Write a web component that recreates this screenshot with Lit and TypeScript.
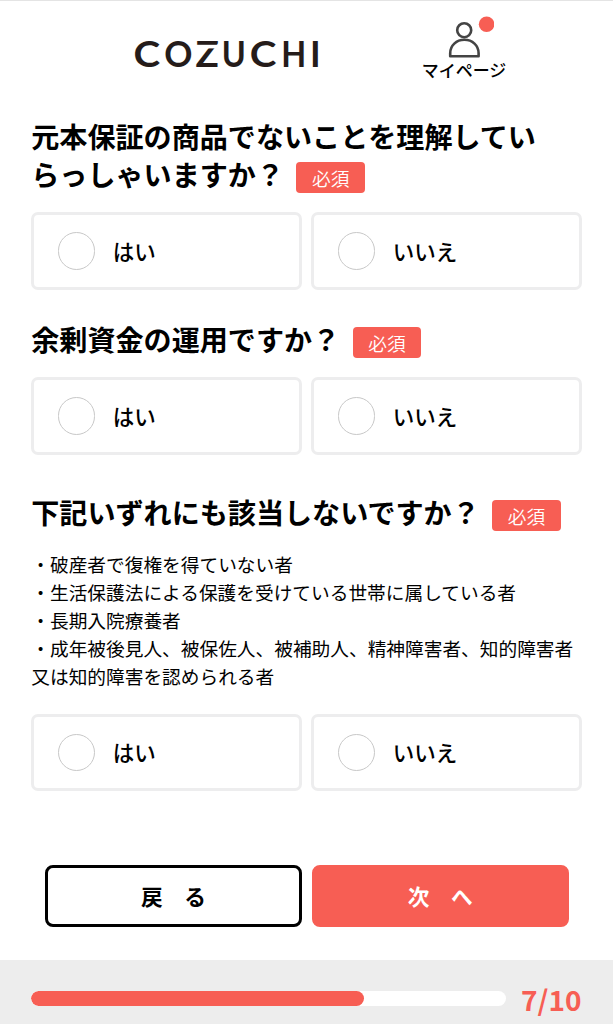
import { LitElement, html, css, svg } from "lit";
import { customElement, property } from "lit/decorators.js";

@customElement("choice-card")
class ChoiceCard extends LitElement {
  @property() label = "";
  static styles = css`
    :host {
      box-sizing: border-box;
      display: flex;
      align-items: center;
      gap: 17.5px;
      height: 77.5px;
      padding-left: 23.5px;
      border: 3px solid #ededee;
      border-radius: 7px;
      background: #fff;
    }
    .dot {
      box-sizing: border-box;
      width: 37.5px;
      height: 37.5px;
      border: 1.4px solid #c8c8c8;
      border-radius: 50%;
    }
    .label {
      font-size: 21.5px;
      line-height: 32px;
      font-weight: 500;
    }
  `;
  render() {
    return html`<span class="dot"></span><span class="label">${this.label}</span>`;
  }
}

@customElement("question-block")
class QuestionBlock extends LitElement {
  @property({ attribute: false }) lines: string[] = [];
  @property({ attribute: false }) notes: string[] = [];
  static styles = css`
    :host {
      display: block;
    }
    .title {
      margin: 0;
      font-size: 28.08px;
      line-height: 36px;
      font-weight: 700;
      white-space: nowrap;
    }
    .row {
      display: flex;
      height: 38px;
    }
    .badge {
      box-sizing: border-box;
      width: 68.7px;
      height: 31px;
      margin: 6px 0 0 12.4px;
      border-radius: 4px;
      background: #f75e54;
      color: #fff;
      font-size: 18.7px;
      line-height: 31px;
      font-weight: 350;
      text-align: center;
    }
    .notes {
      margin: 18px 0 8px;
      font-size: 18.7px;
      line-height: 28px;
      white-space: nowrap;
    }
    .choices {
      display: grid;
      grid-template-columns: 1fr 1fr;
      gap: 9.5px;
      margin-top: 18px;
    }
    .notes + .choices {
      margin-top: 23.5px;
    }
  `;
  render() {
    const last = this.lines.length - 1;
    return html`
      <h2 class="title">
        ${this.lines.map(
          (t, i) => html`<div class="row"><span>${t}</span>${i === last ? html`<span class="badge">必須</span>` : ""}</div>`
        )}
      </h2>
      ${this.notes.length ? html`<div class="notes">${this.notes.map((n) => html`<div>${n}</div>`)}</div>` : ""}
      <div class="choices">
        <choice-card label="はい"></choice-card>
        <choice-card label="いいえ"></choice-card>
      </div>
    `;
  }
}

// Wordmark letters: glyph, left edge, horizontal stretch.
const WORDMARK: [string, number, number][] = [
  ["C", 133.4, 1.12],
  ["O", 164.2, 0.97],
  ["Z", 195.4, 1.07],
  ["U", 221.8, 0.9],
  ["C", 249.8, 1.12],
  ["H", 281.2, 0.9],
  ["I", 310, 1],
];

@customElement("app-root")
class AppRoot extends LitElement {
  @property({ type: Number }) step = 7;
  @property({ type: Number }) total = 10;
  static styles = css`
    :host {
      box-sizing: border-box;
      display: flex;
      flex-direction: column;
      height: 1024px;
      overflow: hidden;
      border-top: 1px solid #e4e4e4;
      background: #fff;
      color: #000;
      font-family: "Noto Sans CJK JP", sans-serif;
    }
    .header {
      display: flex;
      height: 117px;
      flex: none;
    }
    .logo {
      display: block;
      width: 200px;
      height: 60px;
      margin: 23px 0 0 128px;
    }
    .logo text {
      font-family: Lato, sans-serif;
      font-size: 36px;
      font-weight: 700;
      fill: #251c1a;
    }
    .mypage {
      display: flex;
      flex-direction: column;
      align-items: center;
      width: 100px;
      margin: 13px 0 0 86px;
      font-size: 17px;
      line-height: 23px;
      font-weight: 500;
      white-space: nowrap;
    }
    .person {
      display: block;
      width: 60px;
      height: 44px;
      flex: none;
    }
    .form {
      flex: 1;
      padding: 0 31.3px;
    }
    .second {
      margin-top: 31.7px;
    }
    .third {
      margin-top: 39.5px;
    }
    .actions {
      display: grid;
      grid-template-columns: 1fr 1fr;
      gap: 9.5px;
      margin: 73.5px 12.8px 0 13.5px;
    }
    .button {
      box-sizing: border-box;
      height: 62px;
      border: 3px solid #000;
      border-radius: 8px;
      background: #fff;
      color: #000;
      font: inherit;
      font-size: 21.7px;
      font-weight: 700;
      line-height: 32px;
      padding: 0;
    }
    .next {
      border-color: #f75e54;
      background: #f75e54;
      color: #fff;
    }
    .footer {
      box-sizing: border-box;
      display: flex;
      flex: none;
      height: 64px;
      padding: 30.5px 31.5px 0 31px;
      justify-content: space-between;
      background: #ededed;
    }
    .track {
      width: 475px;
      height: 15.5px;
      border-radius: 8px;
      background: #fff;
      overflow: hidden;
    }
    .fill {
      height: 100%;
      border-radius: 8px;
      background: #f75e54;
    }
    .count {
      margin-top: -12px;
      color: #f75e54;
      font-size: 28px;
      line-height: 40px;
      font-weight: 700;
    }
  `;
  render() {
    return html`
      <header class="header">
        <svg class="logo" viewBox="128 24 200 60">
          ${WORDMARK.map(([c, x, s]) => svg`<text transform="translate(${x} 67) scale(${s} 1)">${c}</text>`)}
          <rect x="196" y="44.8" width="23" height="3.6" fill="#fff" />
        </svg>
        <div class="mypage">
          <svg class="person" viewBox="434 14 60 44">
            <g fill="none" stroke="#444" stroke-width="2.6">
              <circle cx="464.2" cy="30.2" r="7" />
              <path d="M450.2 56.2v-3c0-7.6 6.2-13.4 14.2-13.4s14.2 5.8 14.2 13.4v3z" stroke-linejoin="round" />
            </g>
            <circle cx="486.6" cy="24.3" r="7.8" fill="#f75e54" />
          </svg>
          <span>マイページ</span>
        </div>
      </header>
      <main class="form">
        <question-block .lines=${["元本保証の商品でないことを理解してい", "らっしゃいますか？"]}></question-block>
        <question-block class="second" .lines=${["余剰資金の運用ですか？"]}></question-block>
        <question-block
          class="third"
          .lines=${["下記いずれにも該当しないですか？"]}
          .notes=${[
            "・破産者で復権を得ていない者",
            "・生活保護法による保護を受けている世帯に属している者",
            "・長期入院療養者",
            "・成年被後見人、被保佐人、被補助人、精神障害者、知的障害者",
            "又は知的障害を認められる者",
          ]}
        ></question-block>
        <div class="actions">
          <button class="button">戻　る</button>
          <button class="button next">次　へ</button>
        </div>
      </main>
      <footer class="footer">
        <div class="track"><div class="fill" style="width:${(this.step / this.total) * 100}%"></div></div>
        <span class="count">${this.step}/${this.total}</span>
      </footer>
    `;
  }
}
